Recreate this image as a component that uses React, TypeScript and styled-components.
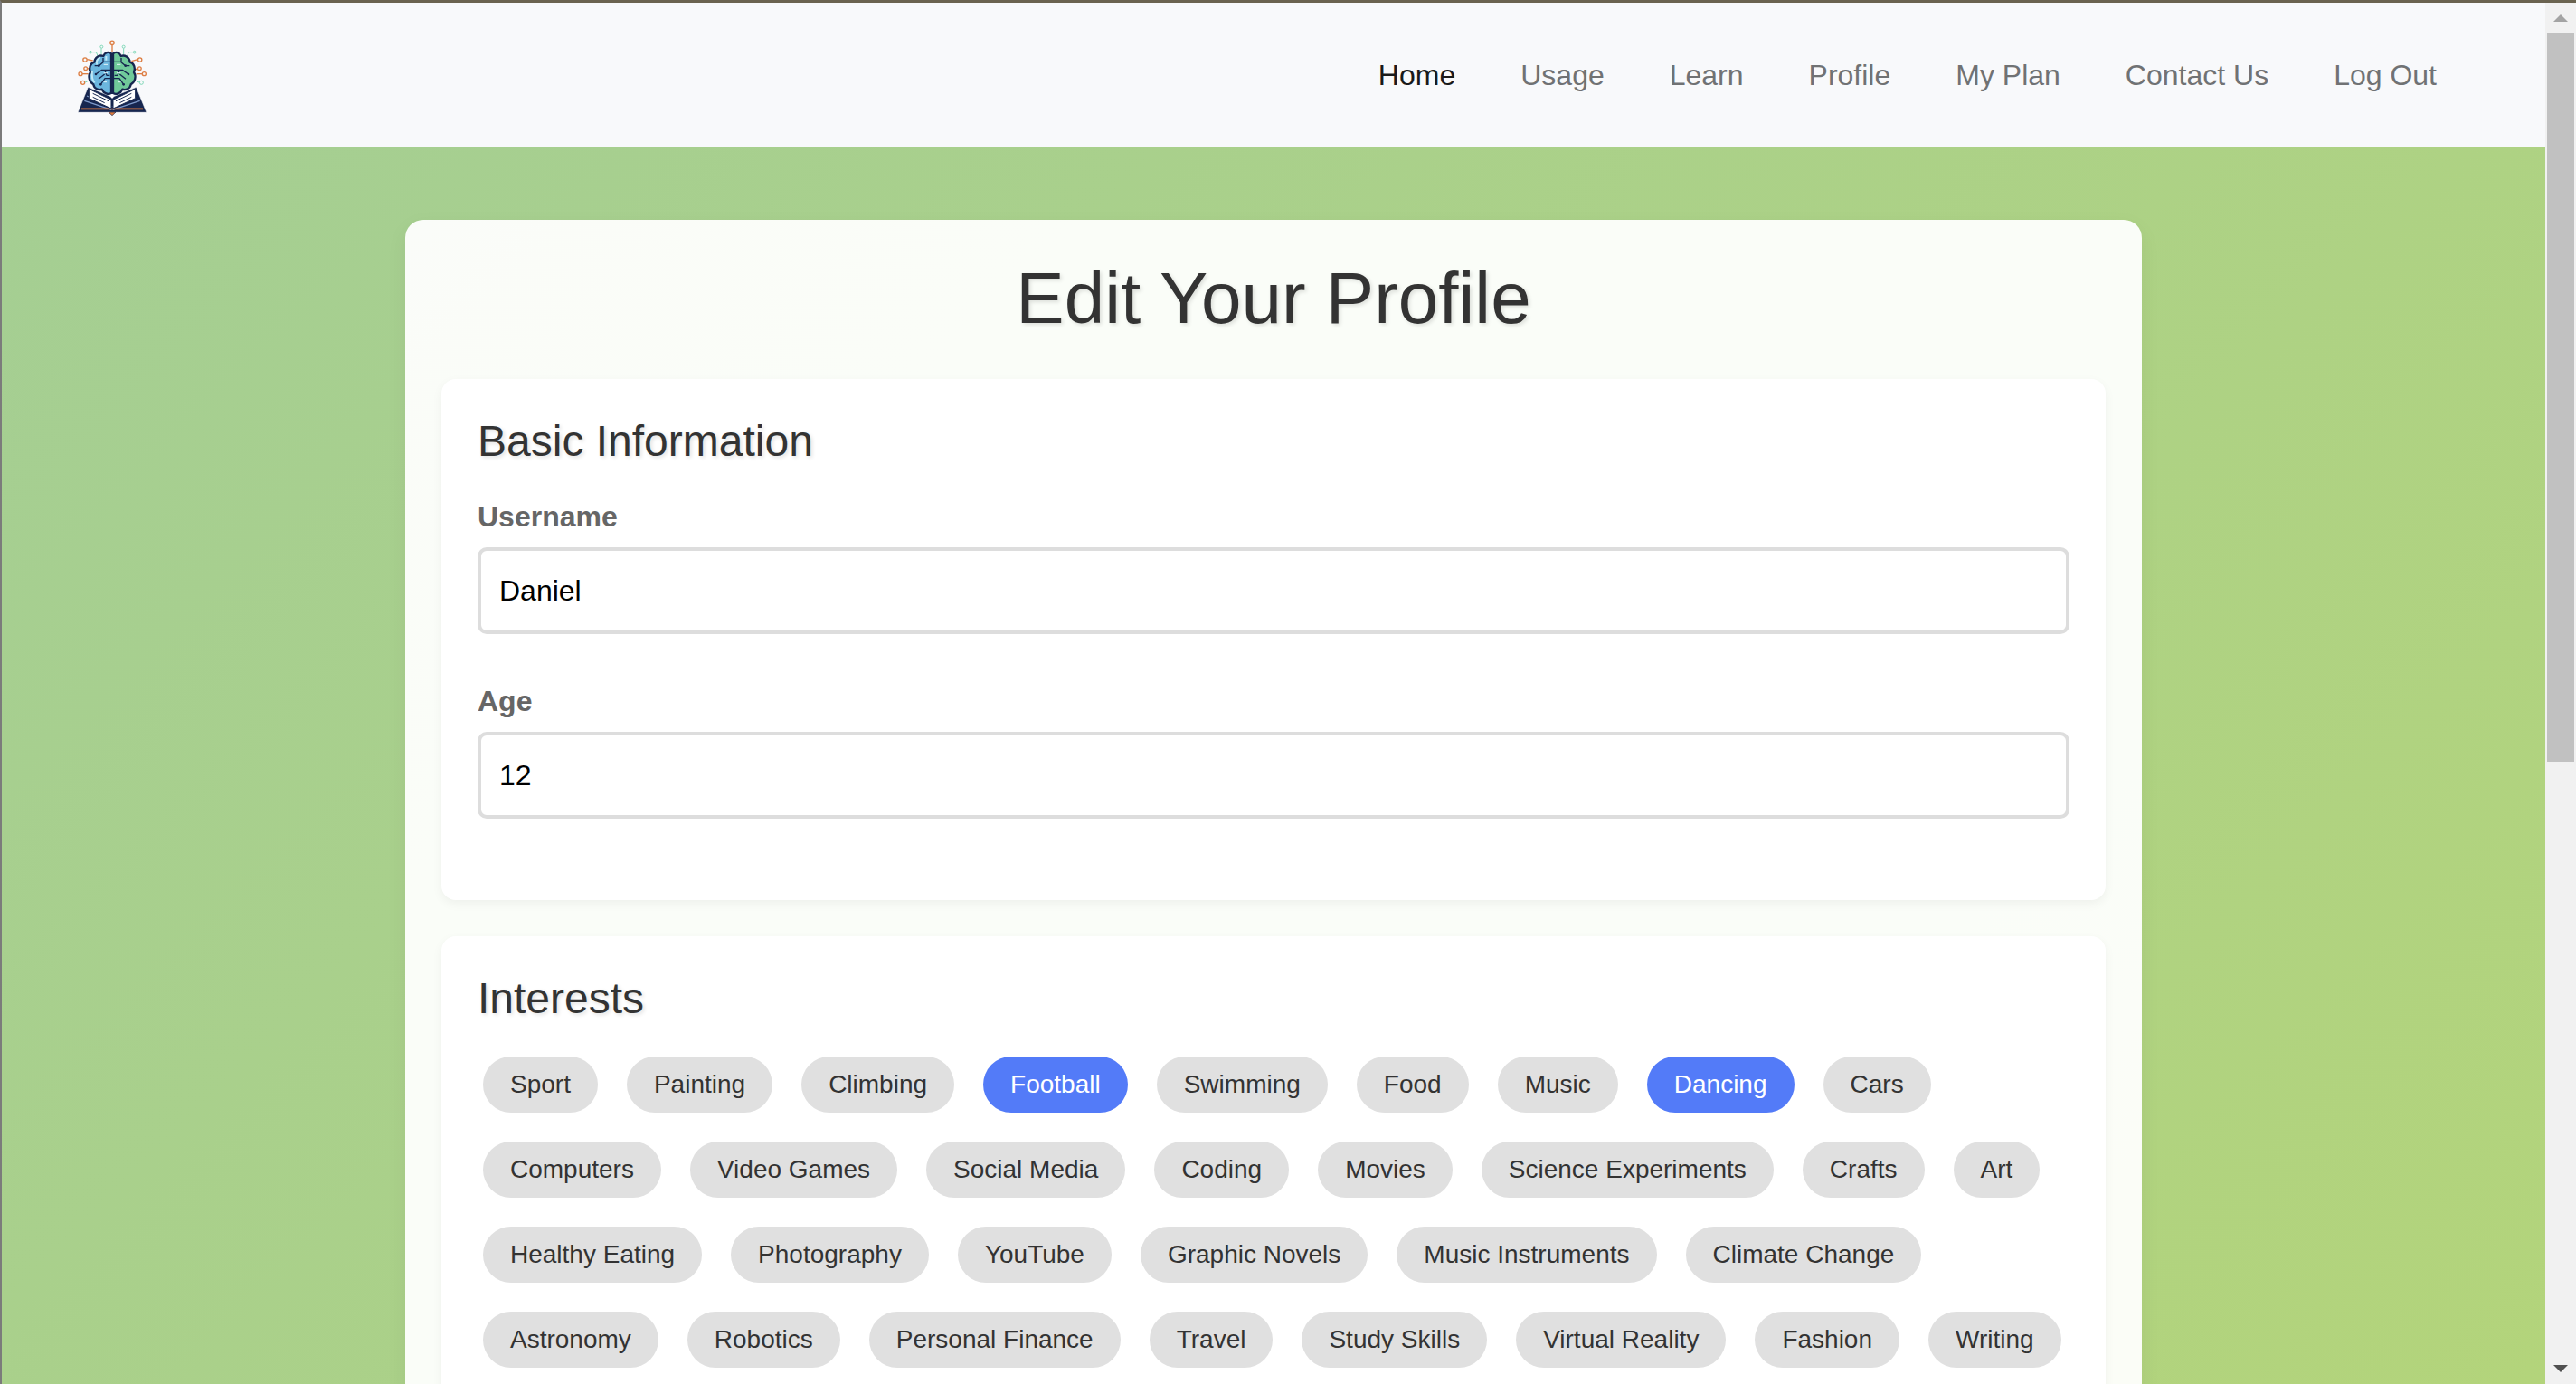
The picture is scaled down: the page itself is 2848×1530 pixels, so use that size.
import React from "react";
import styled, { createGlobalStyle } from "styled-components";

const Global = createGlobalStyle`
  html, body { margin: 0; padding: 0; overflow: hidden; }
  body { font-family: "Liberation Sans", Arial, sans-serif; }
  * { box-sizing: border-box; }
`;

const Frame = styled.div`
  width: 2848px;
  height: 1530px;
  display: flex;
  overflow: hidden;
  border-top: 3px solid #6a6350;
  border-left: 2px solid #7b7b7b;
`;

const Viewport = styled.div`
  flex: 1;
  min-width: 0;
  height: 100%;
  overflow: hidden;
  background: linear-gradient(135deg, #a4ce94 0%, #b3d47b 100%);
`;

const Header = styled.header`
  height: 160px;
  display: flex;
  align-items: center;
  justify-content: space-between;
  padding: 0 120px 0 82px;
  background: #f8f9fb;
`;

const Nav = styled.nav`
  display: flex;
  gap: 72px;
`;

const NavLink = styled.a<{ $active?: boolean }>`
  font-size: 32px;
  line-height: 48px;
  color: ${(p) => (p.$active ? "#1a1a1a" : "#707274")};
  text-decoration: none;
`;

const Card = styled.main`
  width: 1920px;
  margin: 80px auto 0;
  padding: 40px;
  background: rgba(255, 255, 255, 0.94);
  border-radius: 20px;
  box-shadow: 0 8px 24px rgba(0, 0, 0, 0.05);
`;

const Title = styled.h1`
  margin: 1px 0 43px;
  font-size: 80px;
  font-weight: 400;
  line-height: 92px;
  text-align: center;
  color: #333;
  text-shadow: 2px 2px 4px rgba(0, 0, 0, 0.12);
`;

const Section = styled.section`
  padding: 41px 40px 40px;
  margin-bottom: 40px;
  background: #fff;
  border-radius: 16px;
  box-shadow: 0 4px 12px rgba(0, 0, 0, 0.05);
`;

const SectionTitle = styled.h2`
  margin: 0 0 38px;
  font-size: 48px;
  font-weight: 400;
  line-height: 55px;
  color: #333;
  text-shadow: 2px 2px 4px rgba(0, 0, 0, 0.12);
`;

const Field = styled.div`
  margin-bottom: 56px;
  &:last-child { margin-bottom: 50px; }
`;

const Label = styled.label`
  display: block;
  margin-bottom: 15px;
  font-size: 32px;
  font-weight: 700;
  line-height: 37px;
  color: #666;
`;

const TextInput = styled.input`
  display: block;
  width: 100%;
  height: 96px;
  padding: 0 20px;
  font-family: inherit;
  font-size: 32px;
  color: #000;
  background: #fff;
  border: 4px solid #ddd;
  border-radius: 10px;
  outline: none;
`;

const PillGrid = styled.div`
  display: flex;
  flex-wrap: wrap;
  gap: 32px;
  margin-top: -1px;
  padding: 0 6px;
`;

const Pill = styled.span<{ $active?: boolean }>`
  display: inline-block;
  height: 62px;
  padding: 0 30px;
  font-size: 28px;
  line-height: 62px;
  border-radius: 31px;
  color: ${(p) => (p.$active ? "#fff" : "#333")};
  background: ${(p) => (p.$active ? "#537bf8" : "#e0e0e0")};
`;

const Scrollbar = styled.div`
  width: 34px;
  height: 100%;
  display: flex;
  flex-direction: column;
  align-items: center;
  background: #f1f1f1;
`;

const ArrowSlot = styled.div`
  height: 34px;
  width: 100%;
  display: flex;
  align-items: center;
  justify-content: center;
  flex-shrink: 0;
`;

const Thumb = styled.div`
  width: 30px;
  height: 805px;
  background: #c1c1c1;
`;

const TrackRest = styled.div`
  flex: 1;
`;

const rows = [
  "Sport", "Painting", "Climbing", "Football", "Swimming", "Food", "Music", "Dancing", "Cars",
  "Computers", "Video Games", "Social Media", "Coding", "Movies", "Science Experiments", "Crafts", "Art",
  "Healthy Eating", "Photography", "YouTube", "Graphic Novels", "Music Instruments", "Climate Change",
  "Astronomy", "Robotics", "Personal Finance", "Travel", "Study Skills", "Virtual Reality", "Fashion", "Writing",
];
const selected = new Set(["Football", "Dancing"]);
const links = ["Home", "Usage", "Learn", "Profile", "My Plan", "Contact Us", "Log Out"];

const brainHalf =
  "M367 178C358 170 345 174 341 186C328 181 312 190 311 206C298 210 291 226 298 240C289 252 294 272 308 280C310 294 326 300 336 296C342 310 358 316 367 308Z";

const Logo = () => (
  <svg width="80" height="94" viewBox="250 108 240 282" fill="none" aria-label="logo">
    {/* orange antennas */}
    <g stroke="#dd7f45" strokeWidth="4">
      <circle cx="370" cy="142" r="6.5" />
      <path d="M370 149V173" />
      <circle cx="280" cy="198" r="6.5" />
      <path d="M287 197L306 201" />
      <circle cx="282" cy="227" r="5.5" />
      <path d="M288 227L298 229" />
      <circle cx="265" cy="245" r="6" />
      <path d="M271 245H291" />
      <circle cx="273" cy="274" r="6" />
      <circle cx="462" cy="198" r="6.5" />
      <path d="M455 197L434 203" />
      <circle cx="461" cy="227" r="5.5" />
      <path d="M455 227L444 232" />
      <circle cx="476" cy="245" r="6" />
      <path d="M470 245H450" />
    </g>
    {/* teal antennas */}
    <g stroke="#7fd8b8" strokeWidth="3">
      <circle cx="335" cy="155" r="4.5" />
      <path d="M334 160V181" />
      <circle cx="408" cy="155" r="4.5" />
      <path d="M408 160V182" />
      <circle cx="298" cy="173" r="4" />
      <path d="M302 173H317L323 187" />
      <circle cx="444" cy="173" r="4" />
      <path d="M440 173H425L420 186" />
      <circle cx="467" cy="274" r="6" />
      <path d="M461 273L451 270" />
      <path d="M280 273L288 270" />
    </g>
    {/* book back */}
    <path d="M290 289L256 373H484L450 289L370 322Z" fill="#16264f" stroke="#fff" strokeWidth="2" />
    <path d="M286 318L368 354M278 334L368 364M444 318L372 354M462 334L372 364" stroke="#7f9bcb" strokeWidth="4" />
    <path d="M268 361H472" stroke="#e07b3c" strokeWidth="5" />
    <path d="M358 372H382L370 383Z" fill="#e07b3c" stroke="#16264f" strokeWidth="2" />
    {/* brain */}
    <path d={brainHalf} fill="#6cb6de" stroke="#16264f" strokeWidth="7" strokeLinejoin="round" />
    <path
      d={brainHalf}
      transform="translate(740) scale(-1 1)"
      fill="#70c99a"
      stroke="#16264f"
      strokeWidth="7"
      strokeLinejoin="round"
    />
    <path d="M330 190C320 196 316 206 320 214M304 235C302 250 304 266 312 274M350 186V200" stroke="#bfe8f6" strokeWidth="6" />
    <g stroke="#16264f" strokeWidth="4" strokeLinejoin="round">
      <path d="M367 205H342L326 218H312M367 232H336L316 246M367 260H346L332 280M345 232L352 250H362M340 205V192M325 262L345 246" />
      <path d="M373 205H398L414 218H428M373 232H404L424 246M373 260H394L408 280M395 232L388 250H378M400 205V192M415 262L395 246" />
      <path d="M370 176V312" strokeWidth="6" />
    </g>
    <path d="M355 214H342M355 242H342M385 214H398M385 242H398M352 272H342M388 272H398" stroke="#e6f6fb" strokeWidth="3" />
    <g fill="#16264f">
      <circle cx="326" cy="218" r="4" />
      <circle cx="316" cy="246" r="4" />
      <circle cx="332" cy="280" r="4" />
      <circle cx="414" cy="218" r="4" />
      <circle cx="424" cy="246" r="4" />
      <circle cx="408" cy="280" r="4" />
    </g>
    {/* pages */}
    <path d="M293 295L367 331V360L293 326Z" fill="#fff" stroke="#16264f" strokeWidth="3" strokeLinejoin="round" />
    <path d="M447 295L373 331V360L447 326Z" fill="#fff" stroke="#16264f" strokeWidth="3" strokeLinejoin="round" />
    <path d="M306 310L358 335M306 322L345 341M434 310L382 335M434 322L395 341" stroke="#16264f" strokeWidth="3" />
    <path d="M370 313L376 320L370 327L364 320Z" fill="#fff" />
  </svg>
);

export default function App() {
  return (
    <>
      <Global />
      <Frame>
        <Viewport>
          <Header>
            <Logo />
            <Nav>
              {links.map((l) => (
                <NavLink key={l} $active={l === "Home"}>{l}</NavLink>
              ))}
            </Nav>
          </Header>
          <Card>
            <Title>Edit Your Profile</Title>
            <Section>
              <SectionTitle>Basic Information</SectionTitle>
              <Field>
                <Label>Username</Label>
                <TextInput defaultValue="Daniel" />
              </Field>
              <Field>
                <Label>Age</Label>
                <TextInput defaultValue="12" />
              </Field>
            </Section>
            <Section>
              <SectionTitle>Interests</SectionTitle>
              <PillGrid>
                {rows.map((r) => (
                  <Pill key={r} $active={selected.has(r)}>{r}</Pill>
                ))}
              </PillGrid>
            </Section>
          </Card>
        </Viewport>
        <Scrollbar>
          <ArrowSlot>
            <svg width="16" height="8" viewBox="0 0 16 8"><path d="M8 0L16 8H0Z" fill="#a3a3a3" /></svg>
          </ArrowSlot>
          <Thumb />
          <TrackRest />
          <ArrowSlot>
            <svg width="16" height="8" viewBox="0 0 16 8"><path d="M0 0H16L8 8Z" fill="#505050" /></svg>
          </ArrowSlot>
        </Scrollbar>
      </Frame>
    </>
  );
}
